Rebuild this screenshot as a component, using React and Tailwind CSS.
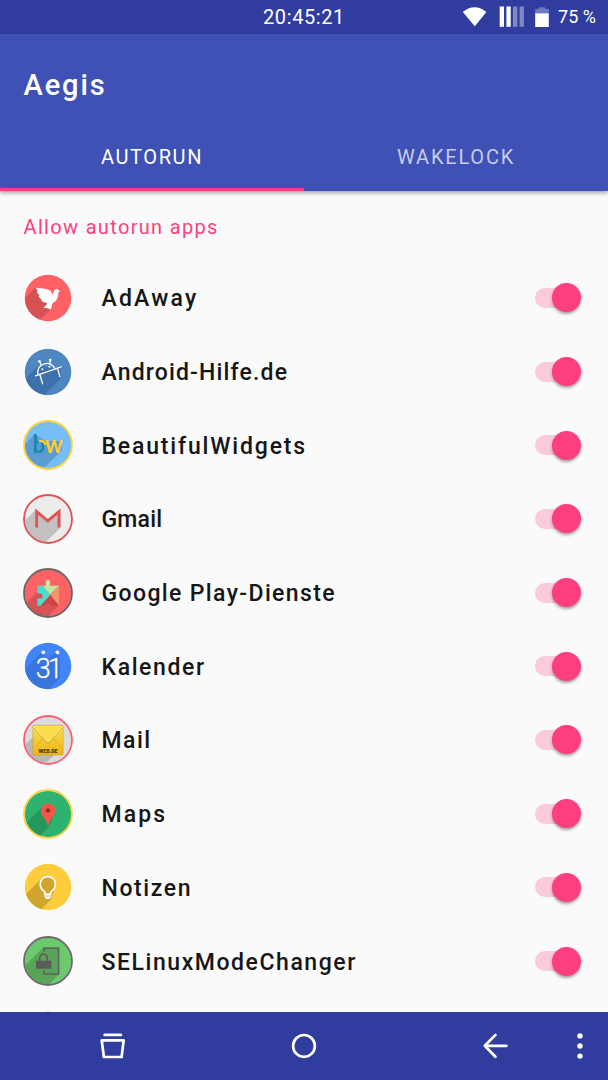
import clsx from "clsx";

function LongShadow({ points, color = "#000", opacity = 0.16 }) {
  return <polygon points={points} fill={color} opacity={opacity} />;
}

function IconBase({ id, fill, ring, children }) {
  return (
    <svg viewBox="0 0 50 50" className="h-[50px] w-[50px] shrink-0">
      <defs>
        <clipPath id={`clip-${id}`}>
          <circle cx="25" cy="25" r="23.2" />
        </clipPath>
      </defs>
      {!ring && <circle cx="25" cy="25" r="24.4" fill="#fff" />}
      <circle cx="25" cy="25" r="23.3" fill={fill} />
      <g clipPath={`url(#clip-${id})`}>{children}</g>
      {ring && (
        <circle
          cx="25"
          cy="25"
          r="24"
          fill="none"
          stroke={ring}
          strokeWidth="1.8"
        />
      )}
    </svg>
  );
}

function AdAwayIcon() {
  return (
    <IconBase id="adaway" fill="#ff6164">
      <LongShadow points="13,14 -8,35 -8,60 3,60 28,36 32,27" />
      <path
        fill="#fff"
        d="M12.8 14.6 C17 16 23 15 26.5 17.3 C28.6 18.7 29 20.5 29.6 22 C30.4 19 31.4 16 34 16 C35.4 16 36 17 36.8 18.8 C35.5 18.6 35.2 20 35.2 21.5 C35.2 25.4 33 28.2 29.8 30 L27.8 36.6 L25.4 35.6 L20.2 34.6 C22.3 33.4 23.8 32 24 30 C21 29.8 18.8 28.6 17.8 26.8 L19.2 26.4 C17 25.4 15.8 24 15.4 22.4 L17 22.4 C14.9 21 14 19.6 13.8 18 L15.4 18 C13.8 17 13 16 12.8 14.6 Z"
      />
    </IconBase>
  );
}

function AndroidHilfeIcon() {
  return (
    <IconBase id="hilfe" fill="#4f86c0">
      <LongShadow points="14,20 -8,42 -8,60 10,60 38,31 38,21" color="#123a78" opacity={0.28} />
      <g fill="none" stroke="#fff" strokeWidth="1.3" strokeLinecap="round">
        <path d="M12.4 28.9 L38.2 19.8" />
        <path d="M14.9 27.5 C13.8 22.5 16.5 18.4 20.8 17 C25.4 15.4 30 17.4 31.9 21.6" />
        <path d="M18.2 18 L16.4 14.3 M27 16.5 L27.2 12.8" />
        <path d="M17 28 L19.6 36.8 M34.8 22 L36.8 29.6" />
      </g>
      <circle cx="16.4" cy="14.3" r="1.3" fill="#fff" />
      <circle cx="27.2" cy="13.1" r="1.3" fill="#fff" />
      <circle cx="19.4" cy="22.2" r="1" fill="#fff" />
      <circle cx="26.5" cy="19.7" r="1" fill="#fff" />
    </IconBase>
  );
}

function BeautifulWidgetsIcon() {
  return (
    <IconBase id="bw" fill="#74bdf5" ring="#fdcf3b">
      <LongShadow points="12,14 -8,34 -8,60 9,60 39,30 38,21 22,21" color="#143c70" opacity={0.26} />
      <text
        x="9.6"
        y="33"
        fontSize="25"
        fontWeight="700"
        fill="#1787b0"
        textLength="30"
        lengthAdjust="spacingAndGlyphs"
        className="font-['Lato',sans-serif]"
      >
        b<tspan fill="#fdcb33">w</tspan>
      </text>
      <path
        d="M16 21.6 C18.8 20.2 21.6 21.6 22.6 25"
        fill="none"
        stroke="#fdcb33"
        strokeWidth="2.4"
      />
    </IconBase>
  );
}

function GmailIcon() {
  return (
    <IconBase id="gmail" fill="#eeebec" ring="#e05353">
      <LongShadow points="12.5,16 -8,36.5 -8,60 11,60 37.5,33.5 37.5,16 25,26" opacity={0.18} />
      <path
        d="M13.7 33.5 V17.6 L24.8 26.8 L36 17.6 V33.5"
        fill="none"
        stroke="#e05353"
        strokeWidth="2.9"
      />
    </IconBase>
  );
}

function PlayServicesIcon() {
  return (
    <IconBase id="play" fill="#ff6265" ring="#6d6460">
      <LongShadow points="14.5,24 -8,46 -8,60 14,60 36,37.5 36,18" />
      <path d="M18 17.8 H22.8 V13.4 Q22.8 12 25 12 Q27.1 12 27.1 13.4 V17.8 H36 L27 26.5 Z" fill="#c0e8a0" />
      <path d="M36 17.8 V37.7 L27 26.5 Z" fill="#f29470" />
      <path d="M15 37.7 L27 26.5 L36 37.7 H28.5 Q28 35.6 25.2 35.6 Q22.6 35.6 22 37.7 Z" fill="#cf4446" />
      <path d="M14.4 17.8 H20 L27.4 26.8 L17.5 37.7 H14.4 V30.4 H17.4 Q19.6 30.4 19.6 28 Q19.6 25.4 17.4 25.4 H14.4 Z" fill="#4ddccb" />
    </IconBase>
  );
}

function CalendarIcon() {
  return (
    <IconBase id="calendar" fill="#4285f8">
      <LongShadow points="19.5,10.5 -8,38 -8,60 14,60 37,37 37,18 33,10.5 24,19" color="#0c2a70" opacity={0.18} />
      <circle cx="20.3" cy="11.3" r="1.9" fill="#fff" />
      <circle cx="34.4" cy="11.3" r="1.9" fill="#fff" />
      <text
        x="12.8"
        y="37.4"
        fontSize="27"
        fontWeight="300"
        fill="#fff"
        stroke="#fff"
        strokeWidth="0.3"
        textLength="27"
        className="font-['Roboto',sans-serif]"
      >
        31
      </text>
    </IconBase>
  );
}

function WebDeIcon() {
  return (
    <IconBase id="webde" fill="#dcdcdc" ring="#fb6175">
      <LongShadow points="10,22 -8,40 -8,60 10,60 40,32 40,22" />
      <defs>
        <linearGradient id="envelope" x1="0" y1="0" x2="0" y2="1">
          <stop offset="0" stopColor="#fbdf55" />
          <stop offset="1" stopColor="#edb416" />
        </linearGradient>
      </defs>
      <rect x="9.8" y="10.3" width="30.3" height="29.8" rx="1" fill="url(#envelope)" stroke="#c79b22" strokeWidth="0.5" />
      <path d="M10.5 33 L20.5 23.5 M39.5 33 L29.3 23.5" stroke="#d9a520" strokeWidth="0.7" />
      <path d="M10.5 11.2 H39.5 L26.6 26 Q25 27.6 23.4 26 Z" fill="#fbdc4c" />
      <path d="M10.5 12.4 L23.4 27 Q25 28.5 26.6 27 L39.5 12.4" fill="none" stroke="#c4951f" strokeWidth="0.8" />
      <path d="M10.5 11.4 L23.4 25.8 Q25 27.3 26.6 25.8 L39.5 11.4" fill="none" stroke="#fff2b0" strokeWidth="0.9" />
      <text
        x="15.6"
        y="37.8"
        fontSize="5.8"
        fontWeight="900"
        fill="#4a3605"
        textLength="19"
        lengthAdjust="spacingAndGlyphs"
        className="font-['Roboto',sans-serif]"
      >
        WEB.DE
      </text>
    </IconBase>
  );
}

function MapsIcon() {
  return (
    <IconBase id="maps" fill="#2db36f" ring="#fdd145">
      <LongShadow points="20,17 -8,45 -8,60 4,60 25.5,38.5 32,24" />
      <path d="M25 14.5 a7.2 7.2 0 0 1 7.2 7.2 C32.2 27.5 25.8 29.5 25 38.8 C24.2 29.5 17.8 27.5 17.8 21.7 A7.2 7.2 0 0 1 25 14.5 Z" fill="#fb5449" />
      <circle cx="25" cy="21.5" r="2.3" fill="#8c302f" />
    </IconBase>
  );
}

function NotesIcon() {
  return (
    <IconBase id="notes" fill="#ffcc3d">
      <LongShadow points="19,16 -8,43 -8,60 6,60 28,37.5 32.5,24" color="#3a2a00" opacity={0.23} />
      <path
        d="M21.6 32 V29.6 C18.5 27.8 17.2 25 17.2 22 C17.2 17.6 20.6 14.6 24.8 14.6 C29 14.6 32.4 17.6 32.4 22 C32.4 25 31 27.8 28 29.6 V32 Z"
        fill="#d3a42b"
        stroke="#fff"
        strokeWidth="1.6"
        strokeLinejoin="round"
      />
      <path d="M21.5 32.2 H28.1 V35.4 H27 V37 H22.6 V35.4 H21.5 Z" fill="#fff" />
      <path d="M22.2 34 H27.4" stroke="#d3a42b" strokeWidth="0.6" />
    </IconBase>
  );
}

function SELinuxIcon() {
  return (
    <IconBase id="selinux" fill="#6cca6d" ring="#6a6a6a">
      <LongShadow points="20,11.5 -8,39.5 -8,60 14,60 36,38.5 36,11.5" opacity={0.18} />
      <path d="M21 15.5 V12.2 H35.6 V38 H21 V34.5" fill="none" stroke="#5a605a" strokeWidth="1.5" />
      <rect x="13" y="24.7" width="15.4" height="8" rx="0.6" fill="#5a5c5a" />
      <path d="M16.7 25 V22 a3.7 3.7 0 0 1 7.6 0 V25" fill="none" stroke="#5a5c5a" strokeWidth="1.7" />
    </IconBase>
  );
}

function NextAppIcon() {
  return <IconBase id="next" fill="#1a96d4" />;
}

const apps = [
  { name: "AdAway", tracking: "tracking-[2.2px]", Icon: AdAwayIcon },
  { name: "Android-Hilfe.de", tracking: "tracking-[1.15px]", Icon: AndroidHilfeIcon },
  { name: "BeautifulWidgets", tracking: "tracking-[1.83px]", Icon: BeautifulWidgetsIcon },
  { name: "Gmail", tracking: "tracking-[0.2px]", Icon: GmailIcon },
  { name: "Google Play-Dienste", tracking: "tracking-[1.37px]", Icon: PlayServicesIcon },
  { name: "Kalender", tracking: "tracking-[1.6px]", Icon: CalendarIcon },
  { name: "Mail", tracking: "tracking-[1.5px]", Icon: WebDeIcon },
  { name: "Maps", tracking: "tracking-[2.1px]", Icon: MapsIcon },
  { name: "Notizen", tracking: "tracking-[1.6px]", Icon: NotesIcon },
  { name: "SELinuxModeChanger", tracking: "tracking-[1.56px]", Icon: SELinuxIcon },
];

function Toggle() {
  return (
    <div className="relative h-[29px] w-[46px] shrink-0">
      <div className="mt-[4.5px] h-5 w-10 rounded-full bg-[#fbcadb]" />
      <div className="absolute right-0 top-0 h-[29px] w-[29px] rounded-full bg-[#fd3f7e] shadow-[0_2px_3px_rgba(0,0,0,0.35)]" />
    </div>
  );
}

function AppRow({ name, tracking, Icon }) {
  return (
    <div className="flex h-[73.7px] shrink-0 items-center pl-[23px] pr-[27px]">
      <Icon />
      <span
        className={clsx(
          "ml-[28.5px] flex-1 whitespace-nowrap pt-[3px] text-[23px] font-medium leading-7 text-[#161616]",
          tracking,
        )}
      >
        {name}
      </span>
      <Toggle />
    </div>
  );
}

function StatusBar() {
  return (
    <div className="relative flex h-[34px] shrink-0 items-center justify-end bg-[#303d9e] pr-3 text-white">
      <span className="absolute inset-x-0 text-center text-xl leading-none tracking-[0.6px]">
        20:45:21
      </span>
      <svg viewBox="0 0 88 22" className="mr-[8px] h-[22px] w-[88px]">
        <path d="M0.8 6 Q6 1.2 12.6 1.2 Q19 1.2 24.4 6 L12.8 20.2 Z" fill="#fff" />
        <rect x="37.7" y="0.5" width="4.3" height="20.3" fill="#fff" />
        <rect x="44.4" y="0.5" width="4.3" height="20.3" fill="#fff" />
        <rect x="51" y="0.5" width="4.3" height="20.3" fill="#8088c4" />
        <rect x="57.6" y="0.5" width="4.3" height="20.3" fill="#8088c4" />
        <path d="M73.2 7.5 V2.8 H77 V1.2 H83 V2.8 H86.8 V7.5 Z" fill="#6f7abf" />
        <rect x="73.2" y="7.3" width="13.6" height="13.7" fill="#fff" />
      </svg>
      <span className="text-lg leading-none">75 %</span>
    </div>
  );
}

function AppBar() {
  return (
    <header className="relative z-10 flex h-[157px] shrink-0 flex-col bg-[#3f51b5] shadow-[0_2px_4px_rgba(0,0,0,0.35)]">
      <h1 className="h-[88px] pl-[23.5px] pt-[31px] text-[29px] font-medium leading-10 tracking-[1.9px] text-white">
        Aegis
      </h1>
      <div className="grid flex-1 grid-cols-2 text-center text-xl">
        <div className="border-b-[3px] border-[#fd3f7e] pt-[21px] tracking-[1.6px] text-white">
          AUTORUN
        </div>
        <div className="pt-[21px] tracking-[1.8px] text-[#c5cbe9]">WAKELOCK</div>
      </div>
    </header>
  );
}

function NavBar() {
  return (
    <nav className="relative z-10 h-[67.6px] shrink-0 bg-[#303d9e]">
      <svg
        viewBox="0 0 608 67.6"
        className="h-full w-full"
        fill="none"
        stroke="#fff"
        strokeWidth="2.7"
        strokeLinecap="round"
        strokeLinejoin="round"
      >
        <path d="M104.6 22.9 H120.9" />
        <path d="M101.7 28.4 H123.6 L121.6 45 H103.9 Z" />
        <circle cx="304" cy="33.9" r="10.9" />
        <path d="M506.4 33.8 H485 M495.5 22.9 L484.8 33.8 L495.5 44.7" />
        <g fill="#fff" stroke="none">
          <circle cx="580" cy="23.9" r="2.7" />
          <circle cx="580" cy="34" r="2.7" />
          <circle cx="580" cy="44.1" r="2.7" />
        </g>
      </svg>
    </nav>
  );
}

export default function App() {
  return (
    <div className="flex h-[1080px] w-[608px] flex-col overflow-hidden bg-[#fafafa] font-['Roboto',sans-serif]">
      <StatusBar />
      <AppBar />
      <main className="flex min-h-0 flex-1 flex-col overflow-hidden">
        <h2 className="h-[70px] shrink-0 pl-[23.5px] pt-[22px] text-xl tracking-[1.33px] text-[#fd3f7e]">
          Allow autorun apps
        </h2>
        {apps.map((app) => (
          <AppRow key={app.name} {...app} />
        ))}
        <div className="flex h-[73.7px] shrink-0 items-center pl-[23px]">
          <NextAppIcon />
        </div>
      </main>
      <NavBar />
    </div>
  );
}
